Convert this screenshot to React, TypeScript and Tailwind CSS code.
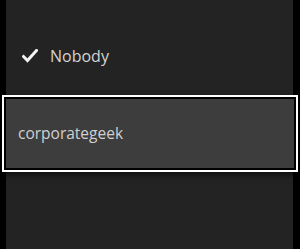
import React from "react";

function Check() {
  return (
    <svg width="16" height="14" viewBox="0 0 16 14" className="shrink-0">
      <path
        d="M1.5 7.5 L5.5 11.5 L14.5 1.5"
        fill="none"
        stroke="#f2f2f2"
        strokeWidth="3"
        strokeLinecap="square"
        strokeLinejoin="miter"
      />
    </svg>
  );
}

export default function App() {
  return (
    <div
      className="w-[300px] h-[249px] bg-black overflow-hidden"
      style={{ fontFamily: '"Open Sans", "Noto Sans", sans-serif' }}
    >
      <div className="ml-[6px] w-[287px] h-[249px] bg-[#232323] flex flex-col pt-[44px]">
        {/* unselected option */}
        <div className="h-[24px] flex items-center gap-[12px] pl-[16px]">
          <Check />
          <span className="text-[16px] text-[#d4d4d4] leading-none">Nobody</span>
        </div>

        {/* focused option */}
        <div className="mt-[27px] -ml-[4px] w-[296px] h-[77px] border-2 border-white shadow-[0_3px_6px_rgba(0,0,0,0.6)]">
          <div className="h-full border-2 border-black bg-[#3d3d3d] flex items-center pl-[12px]">
            <span className="text-[15.5px] text-[#d0d0d0] leading-none">corporategeek</span>
          </div>
        </div>
      </div>
    </div>
  );
}
